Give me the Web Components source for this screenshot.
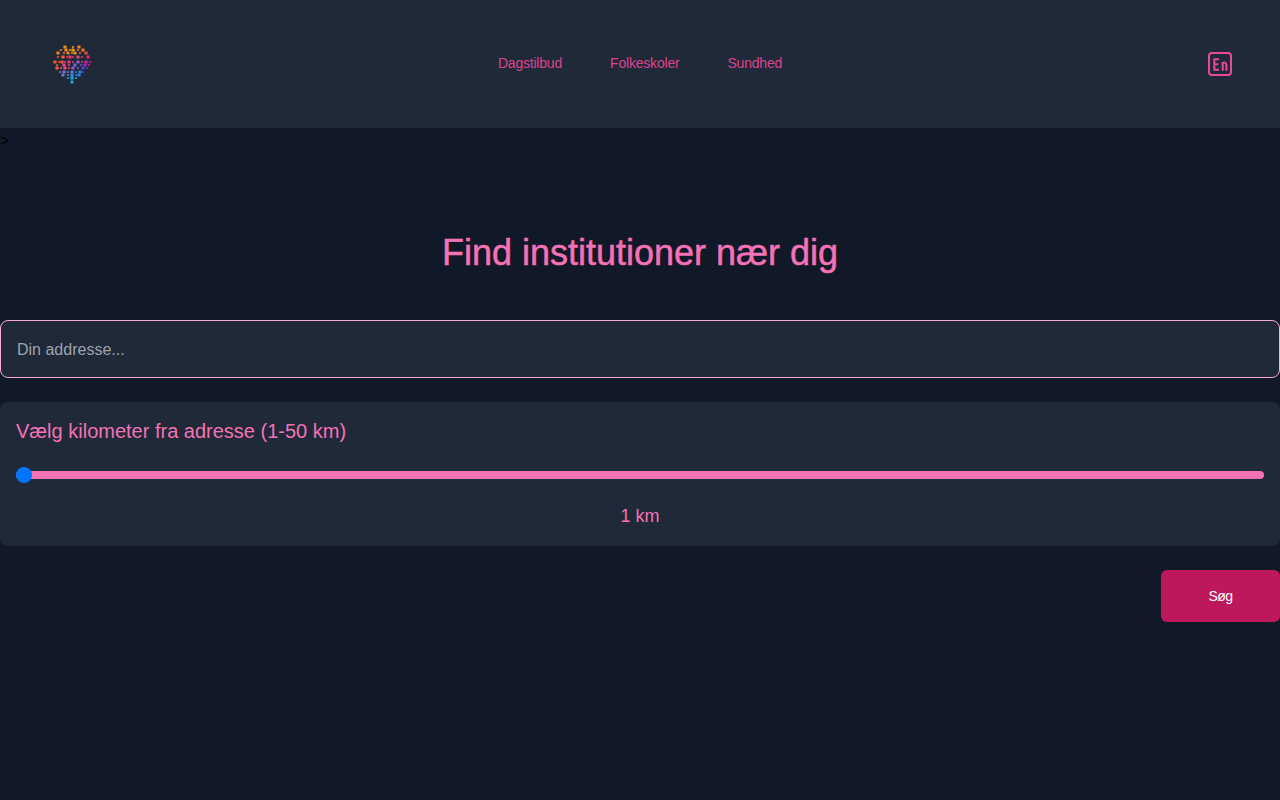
<!DOCTYPE html>
<html lang="da">
<head>
<meta charset="utf-8">
<title>Find institutioner</title>
<style>
    html, body {
        margin: 0;
        min-height: 100%;
        background: #111827;
    }
    body {
        height: 800px;
        overflow: hidden;
        font-family: "Liberation Sans", Arial, sans-serif;
    }
    .stray {
        display: block;
        height: 24px;
        color: #000;
        font: 16px/26px "Liberation Sans", sans-serif;
    }
</style>
</head>
<body>
<site-header>
    <nav-link>Dagstilbud</nav-link>
    <nav-link>Folkeskoler</nav-link>
    <nav-link>Sundhed</nav-link>
</site-header>
<span class="stray">&gt;</span>
<search-page heading="Find institutioner nær dig"></search-page>

<script>
const FONT = '"Liberation Sans", Arial, sans-serif';

// dot rows of the logo: [y, x, x, ...] in a 64x60 box
const LOGO_ROWS = [
    [13, 25, 33, 39],
    [16, 21, 26, 30, 33, 38, 43],
    [19, 18, 24, 28, 32, 35, 40, 46],
    [23, 18, 23, 27, 30, 33, 38, 42, 48],
    [28, 15, 19, 22, 25, 29, 33, 38, 42, 46, 50],
    [31, 17, 24, 29, 35, 41, 45, 49],
    [34, 17, 21, 25, 29, 33, 38, 43, 47],
    [38, 20, 24, 28, 32, 36, 40, 43],
    [41, 23, 28, 32, 36, 39],
    [44, 28, 32, 36],
    [48, 32],
];

// colour anchors of the logo, blended by distance
const LOGO_COLORS = [
    [32, 13, 245, 158, 11],
    [20, 17, 245, 130, 20],
    [44, 16, 240, 120, 30],
    [17, 26, 240, 90, 40],
    [47, 22, 236, 40, 110],
    [50, 30, 200, 30, 160],
    [30, 27, 240, 50, 110],
    [35, 31, 130, 90, 215],
    [17, 34, 240, 90, 70],
    [26, 33, 240, 70, 130],
    [46, 36, 90, 60, 210],
    [24, 40, 100, 120, 200],
    [38, 40, 40, 130, 220],
    [32, 47, 20, 170, 230],
];

function logoColor(x, y) {
    let total = 0;
    const mix = [0, 0, 0];
    for (const [ax, ay, r, g, b] of LOGO_COLORS) {
        const weight = 1 / Math.pow(Math.pow(x - ax, 2) + Math.pow(y - ay, 2) + 1, 2.5);
        total += weight;
        mix[0] += r * weight;
        mix[1] += g * weight;
        mix[2] += b * weight;
    }
    return `rgb(${mix.map((v) => Math.round(v / total)).join(',')})`;
}

class BrandLogo extends HTMLElement {
    constructor() {
        super();
        this.attachShadow({ mode: 'open' });
        const dots = LOGO_ROWS.map((row, rowIndex) => {
            const y = row[0];
            return row.slice(1).map((x, i) => {
                const big = (i + rowIndex) % 2 === 0;
                const size = big ? 3.2 : 2.2;
                return `<rect x="${x - size / 2}" y="${y - size / 2}" width="${size}" height="${size}" rx=".6" fill="${logoColor(x, y)}" opacity="${big ? 1 : .8}"/>`;
            }).join('');
        }).join('');
        this.shadowRoot.innerHTML = `
        <style>
            :host { display: block; width: 48px; height: 60px; }
            svg { display: block; }
        </style>
        <svg width="48" height="60" viewBox="8 0 48 60">${dots}</svg>`;
    }
}

class NavLink extends HTMLElement {
    constructor() {
        super();
        this.attachShadow({ mode: 'open' });
        this.shadowRoot.innerHTML = `
        <style>
            :host {
                display: block;
                color: #ec4899;
                opacity: .9;
                letter-spacing: -.2px;
                font: 14px/20px ${FONT};
            }
        </style>
        <slot></slot>`;
    }
}

class LangButton extends HTMLElement {
    constructor() {
        super();
        this.attachShadow({ mode: 'open' });
        this.shadowRoot.innerHTML = `
        <style>
            :host { display: block; width: 24px; height: 24px; }
            svg { display: block; }
        </style>
        <svg width="24" height="24" viewBox="0 0 24 24" fill="none" stroke="#ec4899" stroke-width="2">
            <rect x="1" y="1" width="22" height="22" rx="3"/>
            <path d="M11 7.300H6.300V17.700H11M6.300 12.300H10.300"/>
            <path d="M14.700 18.700V10M14.700 11.500C15.500 10.500 16.200 10.300 17 10.600 18 11 18.400 11.800 18.400 13V18.700"/>
        </svg>`;
    }
}

class SiteHeader extends HTMLElement {
    constructor() {
        super();
        this.attachShadow({ mode: 'open' });
        this.shadowRoot.innerHTML = `
        <style>
            :host {
                display: grid;
                grid-template-columns: 1fr auto 1fr;
                align-items: center;
                height: 128px;
                box-sizing: border-box;
                padding: 0 48px;
                background: #1f2937;
            }
            nav { display: flex; gap: 48px; margin-top: -2px; }
            .end { justify-self: end; }
        </style>
        <brand-logo></brand-logo>
        <nav><slot></slot></nav>
        <lang-button class="end"></lang-button>`;
    }
}

class AddressInput extends HTMLElement {
    constructor() {
        super();
        this.attachShadow({ mode: 'open' });
        this.shadowRoot.innerHTML = `
        <style>
            :host { display: block; }
            input {
                display: block;
                box-sizing: border-box;
                width: 100%;
                height: 58px;
                padding: 2px 16px 0;
                border: 1px solid #f9a8d4;
                border-radius: 8px;
                background: #1f2937;
                color: #fff;
                font: 16px ${FONT};
                outline: none;
            }
            input::placeholder { color: #9ca3af; opacity: 1; }
        </style>
        <input type="text" placeholder="Din addresse...">`;
    }
}

class DistanceSlider extends HTMLElement {
    constructor() {
        super();
        this.attachShadow({ mode: 'open' });
        this.shadowRoot.innerHTML = `
        <style>
            :host {
                display: block;
                box-sizing: border-box;
                height: 144px;
                padding: 16px;
                border-radius: 8px;
                background: #1f2937;
                color: #f472b6;
            }
            label { display: block; height: 28px; font: 20px/26px ${FONT}; }
            input {
                display: block;
                width: 100%;
                height: 16px;
                margin: 21px 0 0;
                background: transparent;
                -webkit-appearance: none;
                appearance: none;
            }
            input::-webkit-slider-runnable-track {
                height: 8px;
                border-radius: 4px;
                background: #f472b6;
            }
            input::-webkit-slider-thumb {
                -webkit-appearance: none;
                width: 16px;
                height: 16px;
                margin-top: -4px;
                border-radius: 50%;
                background: #0075ff;
            }
            output { display: block; margin-top: 19px; text-align: center; font: 18px/28px ${FONT}; }
        </style>
        <label for="km">Vælg kilometer fra adresse (1-50 km)</label>
        <input id="km" type="range" min="1" max="50" value="1">
        <output>1 km</output>`;
        const range = this.shadowRoot.querySelector('input');
        range.addEventListener('input', () => {
            this.shadowRoot.querySelector('output').textContent = `${range.value} km`;
        });
    }
}

class SearchPage extends HTMLElement {
    constructor() {
        super();
        this.attachShadow({ mode: 'open' });
        this.shadowRoot.innerHTML = `
        <style>
            :host { display: block; padding-top: 81px; }
            h1 {
                margin: 0 0 47px;
                text-align: center;
                color: #f472b6;
                font: 400 36px/40px ${FONT};
                -webkit-text-stroke: .5px #f472b6;
            }
            distance-slider { margin-top: 24px; }
            .actions { display: flex; justify-content: flex-end; margin-top: 24px; }
            button {
                width: 119px;
                height: 52px;
                border: 0;
                border-radius: 6px;
                background: #be185d;
                color: #fff;
                letter-spacing: -.5px;
                font: 14px ${FONT};
            }
        </style>
        <h1></h1>
        <address-input></address-input>
        <distance-slider></distance-slider>
        <div class="actions"><button type="button">Søg</button></div>`;
        this.shadowRoot.querySelector('h1').textContent = this.getAttribute('heading');
    }
}

customElements.define('brand-logo', BrandLogo);
customElements.define('nav-link', NavLink);
customElements.define('lang-button', LangButton);
customElements.define('site-header', SiteHeader);
customElements.define('address-input', AddressInput);
customElements.define('distance-slider', DistanceSlider);
customElements.define('search-page', SearchPage);
</script>
</body>
</html>
